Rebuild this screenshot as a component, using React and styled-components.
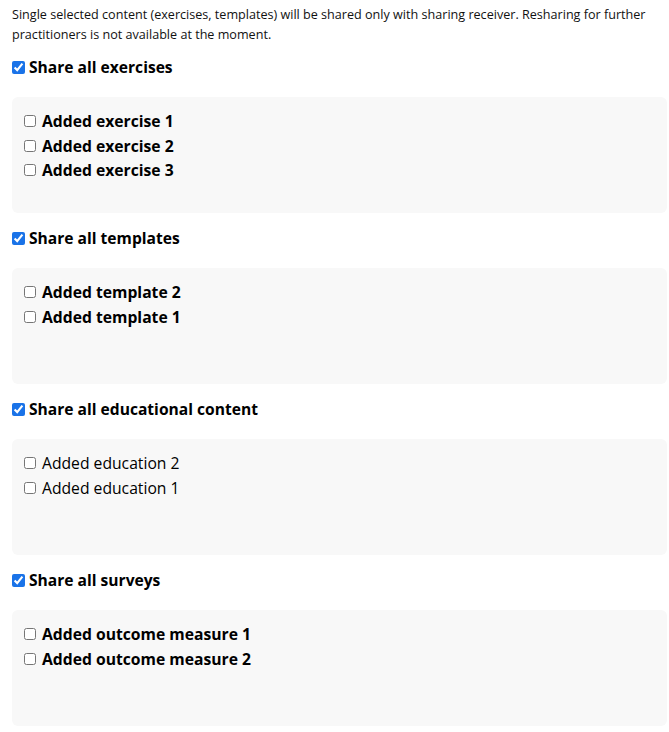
import React from "react";
import styled, { createGlobalStyle } from "styled-components";

const Global = createGlobalStyle`
  html, body { margin: 0; padding: 0; background: #fff; }
  body { font-family: "Open Sans", "Noto Sans", sans-serif; color: #000; }
`;

const Page = styled.div`
  padding: 5px 0 0 12px;
  width: 655px;
`;

const Intro = styled.p`
  margin: 0;
  font-size: 12.6px;
  line-height: 19.5px;
  color: #111;
`;

const Section = styled.section`
  display: flex;
  flex-direction: column;
`;

const Heading = styled.label`
  display: flex;
  align-items: center;
  gap: 4px;
  height: 24px;
  margin: ${(p) => (p.$first ? "11px 0 18px" : "13px 0 18px")};
  font-size: 15.6px;
  font-weight: 700;
  color: #000;
`;

const BigCheck = styled.input.attrs({ type: "checkbox" })`
  width: 13px;
  height: 13px;
  margin: 0;
  accent-color: #1a73e8;
`;

const Panel = styled.div`
  background: #f8f8f8;
  border-radius: 6px;
  min-height: 116px;
  box-sizing: border-box;
  padding: 12px 12px;
  display: flex;
  flex-direction: column;
`;

const Item = styled.label`
  display: flex;
  align-items: center;
  gap: 6px;
  height: 24.5px;
  font-size: 15.7px;
  font-weight: ${(p) => (p.$bold ? 700 : 400)};
  color: #000;
`;

const SmallCheck = styled.input.attrs({ type: "checkbox" })`
  width: 12px;
  height: 12px;
  margin: 0;
`;

const sections = [
  { title: "Share all exercises", bold: true, items: ["Added exercise 1", "Added exercise 2", "Added exercise 3"] },
  { title: "Share all templates", bold: true, items: ["Added template 2", "Added template 1"] },
  { title: "Share all educational content", bold: false, items: ["Added education 2", "Added education 1"] },
  { title: "Share all surveys", bold: true, items: ["Added outcome measure 1", "Added outcome measure 2"] },
];

export default function App() {
  return (
    <>
      <Global />
      <Page>
        <Intro>
          Single selected content (exercises, templates) will be shared only with sharing receiver. Resharing for further
          practitioners is not available at the moment.
        </Intro>
        {sections.map((s, i) => (
          <Section key={s.title}>
            <Heading $first={i === 0}>
              <BigCheck defaultChecked />
              {s.title}
            </Heading>
            <Panel>
              {s.items.map((it) => (
                <Item key={it} $bold={s.bold}>
                  <SmallCheck />
                  {it}
                </Item>
              ))}
            </Panel>
          </Section>
        ))}
      </Page>
    </>
  );
}
